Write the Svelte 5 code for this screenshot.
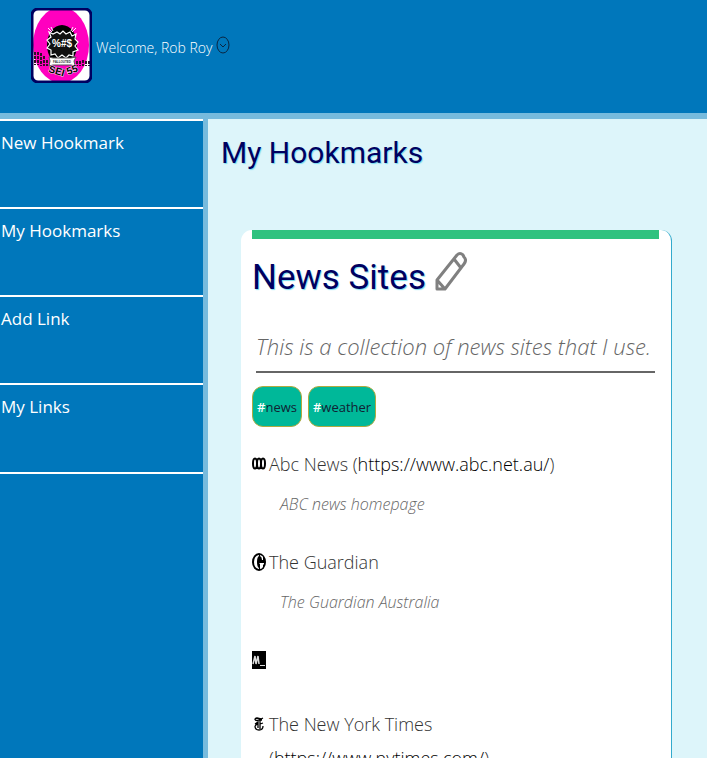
<script>
  const menu = ['New Hookmark', 'My Hookmarks', 'Add Link', 'My Links'];
  const tags = ['news', 'weather'];
  const links = [
    { icon: 'abc', name: 'Abc News', url: 'https://www.abc.net.au/', note: 'ABC news homepage' },
    { icon: 'guardian', name: 'The Guardian', url: '', note: 'The Guardian Australia' },
    { icon: 'mdn', name: '', url: '', note: '' },
    { icon: 'nyt', name: 'The New York Times', url: 'https://www.nytimes.com/', note: '' }
  ];
</script>

<div class="page">
  <header>
    <svg class="avatar" viewBox="0 0 61 75" role="img" aria-label="Rob Roy">
      <defs><clipPath id="frame"><rect x="2" y="2" width="57" height="71" rx="5" /></clipPath></defs>
      <g clip-path="url(#frame)">
        <rect width="61" height="75" fill="#fff" />
        <ellipse cx="30" cy="37" rx="28" ry="38" fill="#ff00bf" />
        <path d="M4 44V57M7 44V57M10 45V58M13 48V58M16 52V58M19 54V58M46 53V58M49 53V58M52 52V58M55 53V58M58 53V58" stroke="#301028" stroke-width="2" stroke-dasharray="3 1" />
        <ellipse cx="31" cy="37" rx="15" ry="20" fill="#000" />
        <path d="M18 24l4 2 4-2 3 2 3-3 3 3 4-2 2 4 4-2-1 5 3 3-3 4 3 4-5 2v4l-4-1-3 3-4-3-4 3-3-4-4 1v-5l-4-2 3-4-3-4 4-3z" fill="#111" stroke="#fff" stroke-width="1.2" />
        <path d="M17 20l4 4M20 19l2 4M45 20l-4 4M42 19l-2 4" stroke="#fff" stroke-width="1" />
        <text x="31" y="39" text-anchor="middle" class="curse">%#$</text>
        <path d="M18 49l4 1h18l5-1-2 4 1 5-4-1H22l-4 1 1-5z" fill="#fff" stroke="#555" stroke-width="1" />
        <text x="31" y="55" text-anchor="middle" class="ribbon">FALLOUTED</text>
        <text x="17" y="64" class="cohort" transform="rotate(16 17 64)">SEI</text>
        <text x="37" y="67" class="cohort" transform="rotate(-20 37 67)">55</text>
      </g>
      <rect x="1" y="1" width="59" height="73" rx="6" fill="none" stroke="#000060" stroke-width="3" />
    </svg>
    <span class="welcome">Welcome, Rob Roy</span>
    <button class="toggle" aria-label="Account menu">
      <svg viewBox="0 0 14 18"><ellipse cx="7" cy="9" rx="6" ry="8" /><path d="M4 8l3 3 3-3" /></svg>
    </button>
  </header>

  <div class="body">
    <nav>
      {#each menu as item}
        <a href="#{item}">{item}</a>
      {/each}
    </nav>

    <main>
      <h1>My Hookmarks</h1>
      <article>
        <div class="bar"></div>
        <div class="title">
          <h2>News Sites</h2>
          <button class="edit" aria-label="Edit News Sites">
            <svg viewBox="0 0 32 40">
              <path d="M2 38V29L22 4Q25 1 28 4L29 6Q32 9 29 13L10 38ZM2 29L10 38M19 8L26 17" />
            </svg>
          </button>
        </div>
        <p class="about">This is a collection of news sites that I use.</p>
        <div class="tags">
          {#each tags as tag}
            <a class="tag" href="#{tag}"><span>#</span>{tag}</a>
          {/each}
        </div>
        <ul>
          {#each links as link}
            <li>
              <div class="icon">
                {#if link.icon === 'abc'}
                  <svg viewBox="0 0 14 18">
                    <path d="M3 3.5Q1 3.5 1 8.500T3 13.500 5 8.500 7 3.500 9 8.500 11 13.500 13 8.500 11 3.500 9 8.500 7 13.500 5 8.500 3 3.500Z" fill="none" stroke="#000" stroke-width="2" />
                  </svg>
                {:else if link.icon === 'guardian'}
                  <svg viewBox="0 0 14 18">
                    <ellipse cx="7" cy="9" rx="7" ry="9" fill="#000" />
                    <path d="M7 2Q2 3 2 9T7 16V15Q5 14 5 9T7 3ZM8 2Q11 3 11 4V7H10Q10 4 8 3ZM7 10H12V11L11 12V14Q10 16 8 16V11Z" fill="#fff" />
                  </svg>
                {:else if link.icon === 'mdn'}
                  <svg viewBox="0 0 14 18">
                    <rect width="14" height="18" fill="#000" />
                    <path d="M1 13L3 5 4 13 6 5 7 13" fill="none" stroke="#ddd" stroke-width="1.5" />
                    <path d="M8 14.500H13" stroke="#ddd" stroke-width="1" />
                  </svg>
                {:else}
                  <svg viewBox="0 0 14 18">
                    <path d="M3 5Q3 3 5 3L9 4 11 3M3 5Q5 6 7 5L10 5M3 9L6 7V13M8 5V14M8 9L11 8M3 11Q3 15 7 15 11 15 11 11M6 8L3 11" fill="none" stroke="#000" stroke-width="1.300" />
                  </svg>
                {/if}
              </div>
              <div class="text">
                {#if link.name}
                  <a class="name" href={link.url || '#guardian'}>{link.name}{#if link.url}{' '}(<b>{link.url}</b>){/if}</a>
                {/if}
                {#if link.note}<p>{link.note}</p>{/if}
              </div>
            </li>
          {/each}
        </ul>
      </article>
    </main>
  </div>
</div>

<style>
  :global(body) { margin: 0; }
  * { box-sizing: border-box; }
  .page {
    display: flex;
    flex-direction: column;
    height: 100vh;
    background: #0077bb;
    font-family: "Open Sans", sans-serif;
    font-weight: 300;
  }
  header {
    display: flex;
    align-items: flex-start;
    flex: none;
    height: 119px;
    padding: 8px 31px;
    border-bottom: 6px solid #77bbdd;
  }
  .avatar { width: 61px; height: 75px; }
  .curse { font: bold 10px "Liberation Sans", sans-serif; fill: #fff; }
  .ribbon { font: bold 3px "Liberation Sans", sans-serif; fill: #333; }
  .cohort { font: bold 10px "Liberation Sans", sans-serif; fill: #000; stroke: #ffd0f0; stroke-width: 1px; paint-order: stroke; }
  .welcome { margin: 28px 4px 0; font-size: 14px; line-height: 24px; color: #fff; }
  button { padding: 0; border: 0; background: none; }
  .toggle { margin-top: 28px; height: 18px; }
  .toggle svg { display: block; width: 14px; height: 18px; fill: none; stroke: #0b2540; stroke-width: 1; }
  .body { display: flex; flex: 1; min-height: 0; }
  nav {
    flex: none;
    width: 208px;
    border-right: 5px solid #77bbdd;
  }
  nav a {
    display: block;
    height: 88px;
    padding: 8px 1px;
    border-top: 2px solid #fff;
    color: #fff;
    font-size: 17px;
    font-weight: 400;
    line-height: 28px;
    text-decoration: none;
  }
  nav a:last-child { height: 91px; border-bottom: 2px solid #fff; }
  main {
    flex: 1;
    min-width: 0;
    padding: 12px 35px 0 33px;
    overflow-y: auto;
    scrollbar-width: none;
    background: #ddf5fa;
  }
  h1, h2 {
    margin: 0;
    font-family: Roboto, sans-serif;
    font-weight: 400;
    color: #000060;
    text-shadow: 1px 1px 1px #77ddee;
  }
  h1 { margin: 0 0 55px -20px; font-size: 30px; line-height: 44px; }
  article {
    padding: 0 12px 40px 11px;
    border-right: 1px solid #33aacc;
    border-radius: 11px;
    background: #fff;
  }
  .bar { height: 9px; background: #2fc27f; }
  .title { display: flex; align-items: flex-start; gap: 9px; }
  h2 { padding-top: 14px; font-size: 35px; line-height: 50px; }
  .edit { margin-top: 12px; height: 40px; }
  .edit svg { display: block; width: 32px; height: 40px; fill: none; stroke: #808080; stroke-width: 3; stroke-linejoin: round; }
  p { margin: 0; color: #666; font-style: italic; }
  .about {
    margin: 25px 4px 13px;
    padding-bottom: 7px;
    border-bottom: 2px solid #666;
    font-size: 22px;
    line-height: 36px;
  }
  .tags { display: flex; gap: 6px; }
  .tag {
    height: 41px;
    padding: 0 4px;
    border: 1px solid #b0aa40;
    border-radius: 11px;
    background: #00b899;
    color: #123;
    font-size: 13px;
    font-weight: 400;
    line-height: 40px;
    text-decoration: none;
  }
  .tag span { color: #fff; font-weight: 600; }
  ul { margin: 20px 0 0; padding: 0; list-style: none; }
  li { display: flex; gap: 3px; min-height: 35px; margin-bottom: 29px; }
  .icon svg { display: block; width: 14px; height: 18px; margin-top: 8px; }
  .text { padding-right: 22px; }
  .name { display: block; color: #333; font-size: 18px; line-height: 34px; text-decoration: none; }
  .name b { color: #000; font-weight: 300; }
  .text p { margin: 11px 0 0 11px; font-size: 16px; line-height: 24px; }
</style>
